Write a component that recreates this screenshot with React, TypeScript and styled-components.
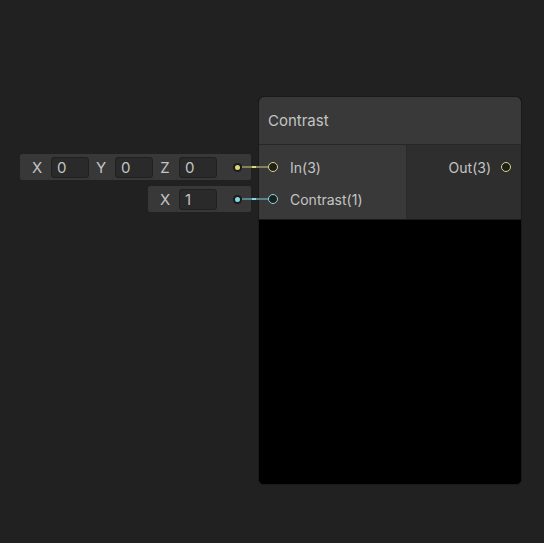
import React from "react";
import styled, { createGlobalStyle } from "styled-components";

const Global = createGlobalStyle`
  html, body { margin: 0; padding: 0; background: #212121; }
  body { font-family: Inter, "Noto Sans", "Liberation Sans", sans-serif; }
`;

const Canvas = styled.div`
  position: relative;
  width: 544px;
  height: 543px;
  background: #212121;
  overflow: hidden;
`;

const Node = styled.div`
  position: absolute;
  left: 258px;
  top: 96px;
  width: 262px;
  height: 387px;
  border: 1px solid #1a1a1a;
  border-radius: 6px;
  display: flex;
  flex-direction: column;
  background: #000;
`;

const Header = styled.div`
  height: 47px;
  flex: none;
  display: flex;
  align-items: center;
  padding-left: 9px;
  background: #393939;
  border-bottom: 1px solid #272727;
  border-radius: 5px 5px 0 0;
  color: #c4c4c4;
  font-size: 15px;
`;

const Ports = styled.div`
  height: 74px;
  flex: none;
  display: flex;
  border-bottom: 1px solid #1c1c1c;
`;

const InputCol = styled.div`
  width: 147px;
  padding-top: 6px;
  background: #393939;
  border-right: 1px solid #2a2a2a;
`;

const OutputCol = styled.div`
  flex: 1;
  padding-top: 6px;
  background: #2e2e2e;
`;

const Row = styled.div<{ $end?: boolean }>`
  position: relative;
  height: 32px;
  display: flex;
  align-items: center;
  justify-content: ${(p) => (p.$end ? "flex-end" : "flex-start")};
  padding: ${(p) => (p.$end ? "0 10px 0 0" : "0 0 0 9px")};
  gap: ${(p) => (p.$end ? "10px" : "12px")};
  color: #c4c4c4;
  font-size: 14px;
`;

const Port = styled.span<{ $c: string }>`
  width: 8px;
  height: 8px;
  border-radius: 50%;
  border: 1.5px solid ${(p) => p.$c};
  background: #1f1f1f;
  flex: none;
`;

const Wire = styled.span<{ $c: string }>`
  position: absolute;
  left: -17px;
  top: 50%;
  width: 26px;
  height: 2px;
  margin-top: -1.5px;
  background: ${(p) => p.$c};
`;

const WireGlow = styled.span<{ $c: string }>`
  position: absolute;
  left: 10px;
  top: 0;
  width: 4px;
  height: 2px;
  background: ${(p) => p.$c};
`;

const Editor = styled.div`
  position: absolute;
  right: 100%;
  margin-right: 8px;
  top: 50%;
  transform: translateY(-50%);
  height: 26px;
  display: flex;
  align-items: center;
  padding: 0 9px 0 12px;
  background: #383838;
  border-radius: 2px;
  color: #c4c4c4;
  font-size: 15px;
  white-space: nowrap;
`;

const Label = styled.span`
  width: 10px;
  text-align: center;
  margin-right: 9px;
`;

const Field = styled.span<{ $last?: boolean }>`
  box-sizing: border-box;
  width: 38px;
  height: 21px;
  padding-left: 5px;
  display: flex;
  align-items: center;
  background: #2a2a2a;
  border: 1px solid #202020;
  border-radius: 3px;
  margin-right: ${(p) => (p.$last ? "16px" : "7px")};
  font-size: 15px;
`;

const Dot = styled.span<{ $c: string }>`
  width: 9px;
  height: 9px;
  border-radius: 50%;
  background: #1c1c1c;
  display: flex;
  align-items: center;
  justify-content: center;
  flex: none;
  &::after {
    content: "";
    width: 5px;
    height: 5px;
    border-radius: 50%;
    background: ${(p) => p.$c};
  }
`;

const Preview = styled.div`
  flex: 1;
  background: #000;
  border-radius: 0 0 5px 5px;
`;

type Input = {
  name: string;
  color: string;
  dim: string;
  fields: { label: string; value: string }[];
};

const inputs: Input[] = [
  {
    name: "In(3)",
    color: "#d9d97c",
    dim: "#83835a",
    fields: [
      { label: "X", value: "0" },
      { label: "Y", value: "0" },
      { label: "Z", value: "0" },
    ],
  },
  {
    name: "Contrast(1)",
    color: "#84d9e2",
    dim: "#56868b",
    fields: [{ label: "X", value: "1" }],
  },
];

export default function App() {
  return (
    <Canvas>
      <Global />
      <Node>
        <Header>Contrast</Header>
        <Ports>
          <InputCol>
            {inputs.map((inp) => (
              <Row key={inp.name}>
                <Editor>
                  {inp.fields.map((f, i) => (
                    <React.Fragment key={f.label}>
                      <Label>{f.label}</Label>
                      <Field $last={i === inp.fields.length - 1}>{f.value}</Field>
                    </React.Fragment>
                  ))}
                  <Dot $c={inp.color} />
                </Editor>
                <Wire $c={inp.dim}>
                  <WireGlow $c={inp.color} />
                </Wire>
                <Port $c={inp.color} />
                <span>{inp.name}</span>
              </Row>
            ))}
          </InputCol>
          <OutputCol>
            <Row $end>
              <span>Out(3)</span>
              <Port $c="#d9d97c" />
            </Row>
          </OutputCol>
        </Ports>
        <Preview />
      </Node>
    </Canvas>
  );
}
